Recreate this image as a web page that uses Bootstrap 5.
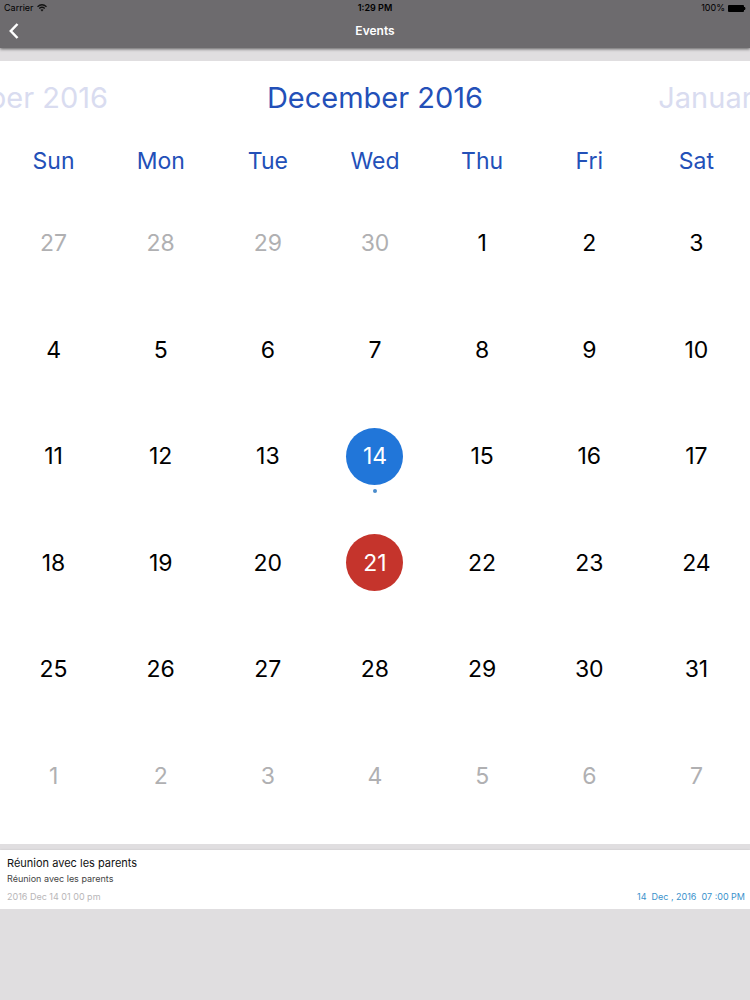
<!DOCTYPE html>
<html lang="en">
<head>
<meta charset="utf-8">
<meta name="viewport" content="width=device-width, initial-scale=1">
<title>Events</title>
<link href="https://cdn.jsdelivr.net/npm/bootstrap@5.3.0/dist/css/bootstrap.min.css" rel="stylesheet">
<style>
  body { background: #e0dee0; font-family: Inter, "Liberation Sans", sans-serif; color: #000; }
  .app-bar { background: #6d6b6e; box-shadow: 0 1px 3px rgba(0,0,0,.6); }
  .status { height: 16px; padding: 0 4px; font-size: 9px; line-height: 16px; }
  .status-item { gap: 3px; }
  .title-row { height: 32px; padding-bottom: 2px; }
  .title-row h1 { font-size: 12px; line-height: 16px; }
  .back { width: 28px; height: 28px; }
  .calendar { margin-top: 13px; padding-bottom: 15px; }
  .months { height: 70px; padding-top: 3px; }
  .month { flex: 0 0 50%; font-size: 29px; line-height: 40px; color: #2350b8; }
  .month.faded { color: #d9dcf0; }
  .days { table-layout: fixed; height: 698px; }
  .days th { height: 59px; font-size: 23px; line-height: 28px; font-weight: 400; color: #2350b8; }
  .day { width: 57px; height: 57px; font-size: 23px; line-height: 28px; color: #000; }
  .day.outside { color: #b0b0b2; }
  .day.today { background: #c5342c; color: #fff; }
  .day.chosen { background: #2176d9; color: #fff; }
  .dot { width: 4px; height: 4px; margin-top: 4px; background: #4a8ccc; }
  .event { margin-top: 6px; padding: 5px 5px 4px 7px; box-shadow: 0 0 2px rgba(0,0,0,.12); }
  .event h2 { font-size: 11px; line-height: 16px; font-weight: 400; color: #111; }
  .event p { font-size: 9px; line-height: 16px; color: #444; }
  .stamps { padding-top: 2px; font-size: 9px; line-height: 16px; color: #b8b6b8; }
  .stamps .when { color: #3a92cc; white-space: pre; }
</style>
</head>
<body>
<header class="app-bar position-relative">
  <div class="status d-flex justify-content-between position-relative">
    <span class="status-item d-flex align-items-center">Carrier
      <svg width="10" height="8" viewBox="0 0 20 16" fill="none" stroke="#111" stroke-width="2.7" aria-hidden="true"><path d="M1 5.5Q10-2.5 19 5.5M4.500 9Q10 4 15.500 9"/><path d="M7 11.500Q10 9 13 11.500L10 15Z" fill="#111" stroke="none"/></svg>
    </span>
    <span class="position-absolute start-50 translate-middle-x fw-semibold">1:29 PM</span>
    <span class="status-item d-flex align-items-center">100%
      <svg width="18" height="7" viewBox="0 0 18 7" aria-hidden="true"><rect width="16" height="7" rx="1" fill="#000"/><path d="M16 2h1q1 1.500 0 3h-1z"/></svg>
    </span>
  </div>
  <div class="title-row d-flex align-items-center">
    <button type="button" class="btn back p-0 border-0 d-flex align-items-center justify-content-center" aria-label="Back">
      <svg width="10" height="16" viewBox="0 0 10 16" fill="none" stroke="#fff" stroke-width="2.500"><path d="M8.500 1L1.800 8l6.700 7"/></svg>
    </button>
    <h1 class="flex-grow-1 text-center text-white fw-semibold m-0">Events</h1>
    <span class="back"></span>
  </div>
</header>
<main>
  <section class="calendar bg-white">
    <div class="months d-flex justify-content-center align-items-center overflow-hidden">
      <button type="button" class="month faded btn p-0 border-0 text-nowrap">November 2016</button>
      <h2 class="month text-center text-nowrap fw-normal m-0">December 2016</h2>
      <button type="button" class="month faded btn p-0 border-0 text-nowrap">January 2017</button>
    </div>
    <table class="days w-100 text-center align-middle">
      <thead><tr><th scope="col">Sun</th><th scope="col">Mon</th><th scope="col">Tue</th><th scope="col">Wed</th><th scope="col">Thu</th><th scope="col">Fri</th><th scope="col">Sat</th></tr></thead>
      <tbody id="weeks"></tbody>
    </table>
  </section>
  <article class="event bg-white">
    <h2 class="m-0">Réunion avec les parents</h2>
    <p class="m-0">Réunion avec les parents</p>
    <div class="stamps d-flex justify-content-between">
      <span>2016 Dec 14 01 00 pm</span>
      <span class="when">14  Dec , 2016  07 :00 PM</span>
    </div>
  </article>
</main>
<script src="https://cdn.jsdelivr.net/npm/bootstrap@5.3.0/dist/js/bootstrap.bundle.min.js"></script>
<script>
  // Six weeks, starting on Sunday 27 November 2016
  const weeks = document.getElementById('weeks');
  for (let w = 0; w < 6; w++) {
    const row = weeks.insertRow();
    for (let d = 0; d < 7; d++) {
      const date = new Date(2016, 10, 27 + w * 7 + d);
      const inMonth = date.getMonth() === 11;
      const n = date.getDate();
      const kind = !inMonth ? 'outside' : n === 14 ? 'chosen' : n === 21 ? 'today' : '';
      const dot = kind === 'chosen' ? '<span class="dot rounded-circle position-absolute top-100 start-50 translate-middle-x"></span>' : '';
      row.insertCell().innerHTML = `<button type="button" class="day ${kind} btn p-0 border-0 rounded-circle position-relative">${n}${dot}</button>`;
    }
  }
</script>
</body>
</html>
